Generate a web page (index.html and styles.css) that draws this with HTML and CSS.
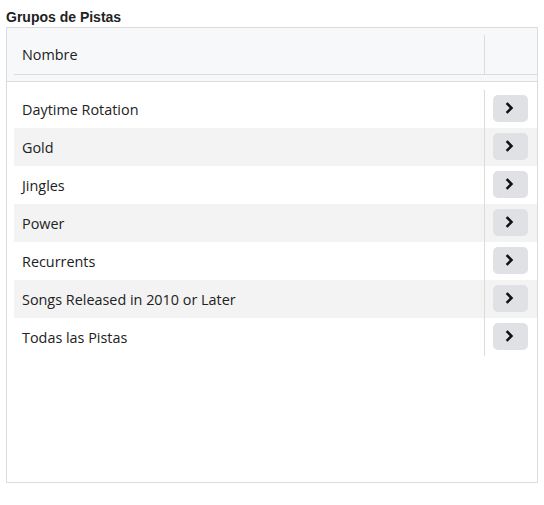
FILE: index.html
```html
<!DOCTYPE html>
<html>
<head>
<meta charset="utf-8">
<link rel="stylesheet" href="styles.css">
</head>
<body>
<div class="page">
  <h2 class="title">Grupos de Pistas</h2>
  <div class="panel">
    <div class="head">
      <div class="head-row">
        <div class="cell-name">Nombre</div>
        <div class="cell-act"></div>
      </div>
    </div>
    <div class="body">
      <div class="row"><div class="cell-name">Daytime Rotation</div><div class="cell-act"><button class="go"><svg viewBox="0 0 12 12" width="12" height="12"><path d="M3.5 2 L7.5 6 L3.5 10" fill="none" stroke="#111" stroke-width="2.5" stroke-linecap="square"/></svg></button></div></div>
      <div class="row alt"><div class="cell-name">Gold</div><div class="cell-act"><button class="go"><svg viewBox="0 0 12 12" width="12" height="12"><path d="M3.5 2 L7.5 6 L3.5 10" fill="none" stroke="#111" stroke-width="2.5" stroke-linecap="square"/></svg></button></div></div>
      <div class="row"><div class="cell-name">Jingles</div><div class="cell-act"><button class="go"><svg viewBox="0 0 12 12" width="12" height="12"><path d="M3.5 2 L7.5 6 L3.5 10" fill="none" stroke="#111" stroke-width="2.5" stroke-linecap="square"/></svg></button></div></div>
      <div class="row alt"><div class="cell-name">Power</div><div class="cell-act"><button class="go"><svg viewBox="0 0 12 12" width="12" height="12"><path d="M3.5 2 L7.5 6 L3.5 10" fill="none" stroke="#111" stroke-width="2.5" stroke-linecap="square"/></svg></button></div></div>
      <div class="row"><div class="cell-name">Recurrents</div><div class="cell-act"><button class="go"><svg viewBox="0 0 12 12" width="12" height="12"><path d="M3.5 2 L7.5 6 L3.5 10" fill="none" stroke="#111" stroke-width="2.5" stroke-linecap="square"/></svg></button></div></div>
      <div class="row alt"><div class="cell-name">Songs Released in 2010 or Later</div><div class="cell-act"><button class="go"><svg viewBox="0 0 12 12" width="12" height="12"><path d="M3.5 2 L7.5 6 L3.5 10" fill="none" stroke="#111" stroke-width="2.5" stroke-linecap="square"/></svg></button></div></div>
      <div class="row"><div class="cell-name">Todas las Pistas</div><div class="cell-act"><button class="go"><svg viewBox="0 0 12 12" width="12" height="12"><path d="M3.5 2 L7.5 6 L3.5 10" fill="none" stroke="#111" stroke-width="2.5" stroke-linecap="square"/></svg></button></div></div>
    </div>
  </div>
</div>
</body>
</html>
```
FILE: styles.css
```css
* { box-sizing: border-box; }
html, body { margin: 0; padding: 0; background: #fff; }
body { font-family: "Open Sans", "Noto Sans", sans-serif; color: #222; }
.page { padding: 8px 6px 0 6px; }
.title {
  margin: 0;
  font-family: "Liberation Sans", Arial, sans-serif;
  font-size: 14px;
  font-weight: bold;
  line-height: 19px;
  color: #222;
}
.panel {
  border: 1px solid #dcdcdc;
  height: 456px;
  background: #fff;
}
.head {
  background: #f7f8fa;
  padding-left: 7px;
  border-bottom: 1px solid #dcdcdc;
  height: 54px;
}
.head-row {
  display: flex;
  height: 47px;
  border-bottom: 1px solid #dcdcdc;
  padding-top: 7px;
}
.head-row .cell-name {
  flex: 1;
  padding-left: 8px;
  font-size: 14.4px;
  line-height: 40px;
}
.head-row .cell-act {
  width: 53px;
  border-left: 1px solid #dcdcdc;
  height: 39px;
}
.body { padding: 8px 0 0 7px; }
.row { display: flex; height: 38px; align-items: stretch; }
.row.alt { background: #f3f3f3; }
.row .cell-name {
  flex: 1;
  padding-left: 8px;
  font-size: 14.4px;
  line-height: 40px;
}
.row .cell-act {
  width: 53px;
  border-left: 1px solid #dcdcdc;
  display: flex;
  align-items: center;
  padding-left: 8px;
}
.go {
  width: 35px;
  height: 27px;
  border: 0;
  border-radius: 5px;
  background: #dfe1e5;
  display: flex;
  align-items: center;
  justify-content: center;
  padding: 0;
  margin-top: -1px;
}
.go svg { display: block; margin: -1px 0 0 -1px; }
```
